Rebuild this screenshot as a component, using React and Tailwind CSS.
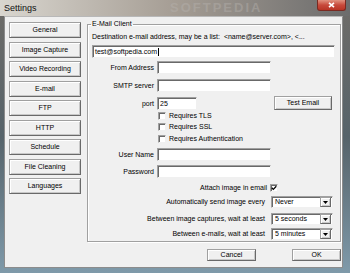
import React from "react";

const btn3d =
  "flex items-center justify-center bg-[#f0f0f0] border border-[#a0a0a0] border-r-[#696969] border-b-[#696969] shadow-[inset_1px_1px_0_#ffffff,inset_-1px_-1px_0_#c8c8c8]";
const sunken =
  "bg-white border border-[#a0a0a0] border-r-[#f0f0f0] border-b-[#f0f0f0] shadow-[inset_1px_1px_0_#696969]";

const NavButton = ({ label, className = "" }) => (
  <div className={`${btn3d} h-[16px] w-[72px] ${className}`}>{label}</div>
);

const Field = ({ label, value, width = "w-[114px]", className = "" }) => (
  <div className={`flex items-center h-[13px] ${className}`}>
    <span className="w-[62px] text-right">{label}</span>
    <div className={`${sunken} ml-[3px] h-[13px] ${width} flex items-center pl-[2px]`}>
      {value}
    </div>
  </div>
);

const Check = ({ label, checked = false, className = "" }) => (
  <div className={`flex items-center h-[8px] ${className}`}>
    <div className={`${sunken} w-[8px] h-[8px] flex items-center justify-center`}>
      {checked && (
        <svg width="6" height="6" viewBox="0 0 6 6">
          <path d="M0.8 2.8 L2.3 4.4 L5.3 1.2" stroke="#000" strokeWidth="1.3" fill="none" />
        </svg>
      )}
    </div>
    {label && <span className="ml-[3px]">{label}</span>}
  </div>
);

const Select = ({ value }) => (
  <div className={`${sunken} w-[62px] h-[12px] flex items-center`}>
    <span className="flex-1 pl-[3px] overflow-hidden whitespace-nowrap">{value}</span>
    <div className={`${btn3d} w-[11px] h-[10px] mr-[1px]`}>
      <svg width="5" height="3" viewBox="0 0 5 3">
        <path d="M0 0 H5 L2.5 3 Z" fill="#000" />
      </svg>
    </div>
  </div>
);

const WaitRow = ({ label, value, className = "" }) => (
  <div className={`flex items-center h-[12px] ${className}`}>
    <span className="w-[173px] text-right">{label}</span>
    <div className="ml-[6px]">
      <Select value={value} />
    </div>
  </div>
);

export default function App() {
  const nav = [
    "General",
    "Image Capture",
    "Video Recording",
    "E-mail",
    "FTP",
    "HTTP",
    "Schedule",
    "File Cleaning",
    "Languages",
  ];

  return (
    <div className="w-[350px] h-[273px] flex flex-col overflow-hidden bg-gradient-to-b from-[#6f6c68] via-[#56636a] to-[#7f9aaa] font-['Liberation_Sans',Arial,sans-serif] text-[7px] leading-[8px] text-black">
      {/* title bar */}
      <div className="relative h-[16px] flex items-center pl-[4px] bg-gradient-to-r from-[#d9d6cf] via-[#a59d94] to-[#6c6c6c]">
        <span className="text-[9px] leading-[10px] text-[#101010]">Settings</span>
        <span className="absolute left-[170px] top-0 text-[13px] leading-[16px] font-bold tracking-[2px] text-[#b8b4b0] opacity-40">
          SOFTPEDIA
        </span>
        <div className="absolute right-[4px] top-0 w-[29px] h-[11px] rounded-b-[3px] border border-t-0 border-[#7a2a22] bg-gradient-to-b from-[#e0917f] via-[#c7493b] to-[#b83424] flex items-center justify-center">
          <svg width="7" height="6" viewBox="0 0 7 6">
            <path d="M1 0.8 L6 5.2 M6 0.8 L1 5.2" stroke="#fff" strokeWidth="1.6" />
          </svg>
        </div>
      </div>

      {/* body */}
      <div className="flex-1 flex pl-[4px] pr-[7px] pb-[5px]">
        <div className="flex-1 flex bg-[#f0f0f0] border border-[#8c8c8c] border-t-[#b8b8b8]">
          {/* left nav */}
          <div className="flex flex-col gap-[3.5px] pl-[4px] pt-[5px]">
            {nav.map((n) => (
              <NavButton key={n} label={n} />
            ))}
          </div>

          {/* right side */}
          <div className="flex flex-col pl-[6px] pt-[3px]">
            <fieldset className="w-[254px] h-[222px] border border-[#a0a0a0] shadow-[inset_1px_1px_0_#ffffff,1px_1px_0_#ffffff] px-[4px]">
              <legend className="ml-[-1px] px-[1px] leading-[8px]">E-Mail Client</legend>

              <div className="mt-[5px] whitespace-nowrap">
                Destination e-mail address, may be a list:&nbsp; &lt;name@server.com&gt;, &lt;...
              </div>
              <div className={`${sunken} mt-[4px] h-[13px] w-[243px] flex items-center pl-[2px]`}>
                test@softpedia.com
                <span className="w-[1px] h-[8px] bg-black ml-[1px]" />
              </div>

              <Field label="From Address" className="mt-[3px]" />
              <Field label="SMTP server" className="mt-[5px]" />

              <div className="flex items-end h-[14px] mt-[4px]">
                <Field label="port" value="25" width="w-[40px]" />
                <div className={`${btn3d} ml-[77px] w-[58px] h-[14px]`}>Test Email</div>
              </div>

              <div className="pl-[66px]">
                <Check label="Requires TLS" className="mt-[2px]" />
                <Check label="Requires SSL" className="mt-[3px]" />
                <Check label="Requires Authentication" className="mt-[4px]" />
              </div>

              <Field label="User Name" className="mt-[5px]" />
              <Field label="Password" className="mt-[4px]" />

              <div className="flex items-center h-[8px] mt-[6px]">
                <span className="w-[175px] text-right">Attach image in email</span>
                <div className="ml-[3px]">
                  <Check checked />
                </div>
              </div>

              <WaitRow label="Automatically send image every" value="Never" className="mt-[4px]" />
              <WaitRow label="Between image captures, wait at least" value="5 seconds" className="mt-[5px]" />
              <WaitRow label="Between e-mails, wait at least" value="5 minutes" className="mt-[3px]" />
            </fieldset>

            <div className="flex justify-end gap-[36px] mt-[7px] pr-[0px]">
              <div className={`${btn3d} w-[49px] h-[12px]`}>Cancel</div>
              <div className={`${btn3d} w-[49px] h-[12px]`}>OK</div>
            </div>
          </div>
        </div>
      </div>
    </div>
  );
}
